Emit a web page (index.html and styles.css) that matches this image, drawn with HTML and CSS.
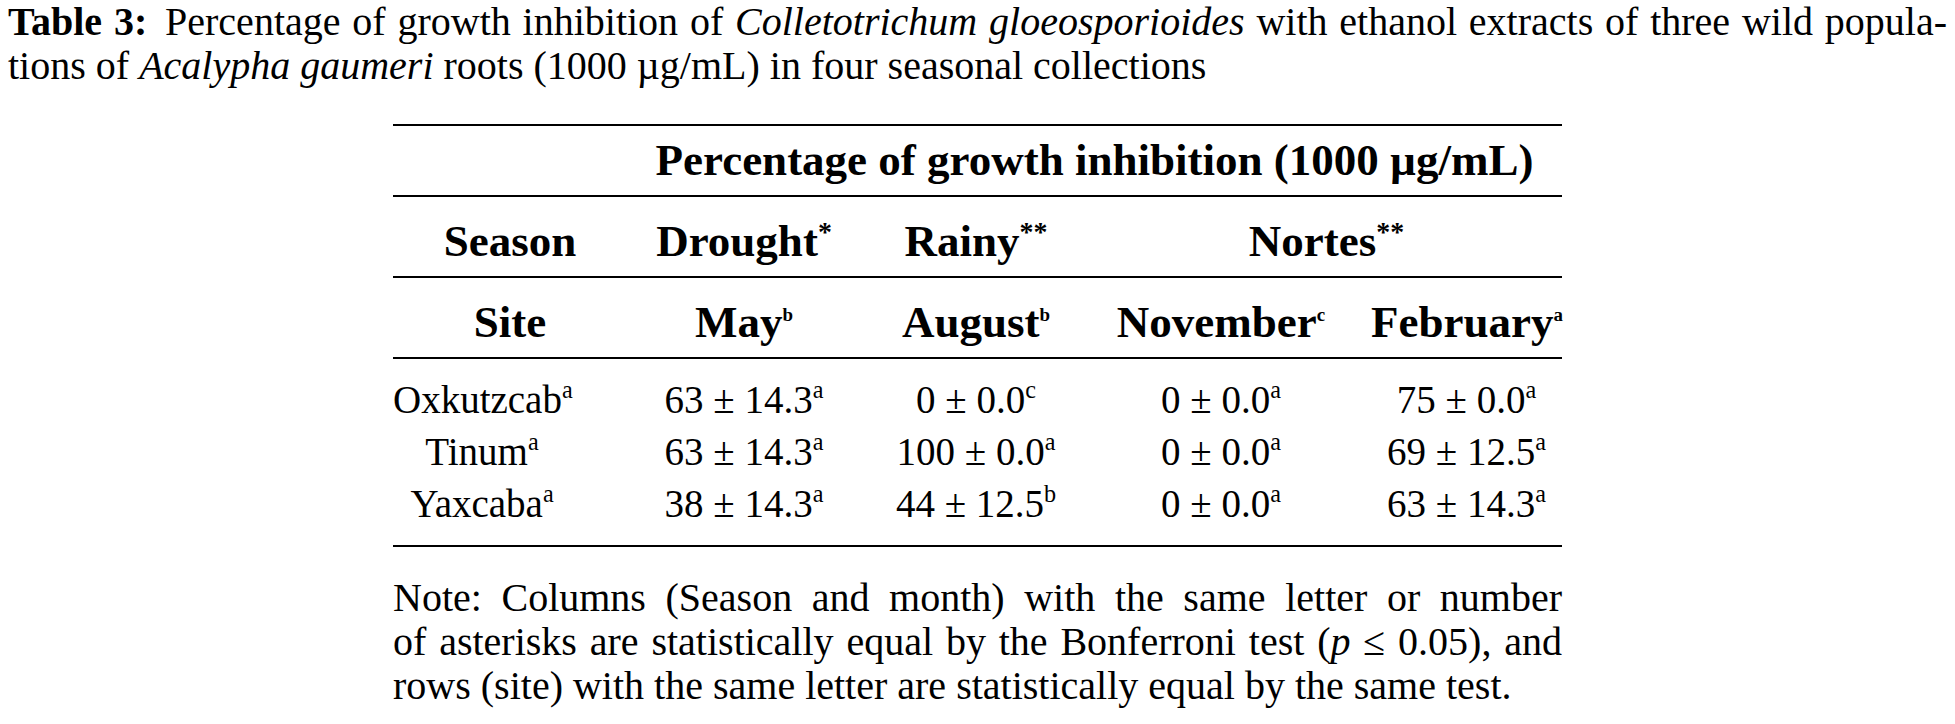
FILE: index.html
```html
<!DOCTYPE html>
<html lang="en">
<head>
<meta charset="utf-8">
<title>Table 3</title>
<link rel="stylesheet" href="styles.css">
</head>
<body>
<div class="page">
  <p class="caption">
    <span class="line full"><b class="label">Table 3:</b> Percentage of growth inhibition of <i>Colletotrichum gloeosporioides</i> with ethanol extracts of three wild popula-</span>
    <span class="line">tions of <i>Acalypha gaumeri</i> roots (1000 µg/mL) in four seasonal collections</span>
  </p>
  <div class="table-wrap">
    <table class="data">
      <colgroup>
        <col class="c1"><col class="c2"><col class="c3"><col class="c4"><col class="c5">
      </colgroup>
      <thead>
        <tr class="r1">
          <th></th>
          <th colspan="4">Percentage of growth inhibition (1000 µg/mL)</th>
        </tr>
        <tr class="r2">
          <th>Season</th>
          <th>Drought<span class="ast">*</span></th>
          <th>Rainy<span class="ast">**</span></th>
          <th colspan="2">Nortes<span class="ast">**</span></th>
        </tr>
        <tr class="r3">
          <th>Site</th>
          <th>May<sup class="hs">b</sup></th>
          <th>August<sup class="hs">b</sup></th>
          <th>November<sup class="hs">c</sup></th>
          <th class="last">February<sup class="hs">a</sup></th>
        </tr>
      </thead>
      <tbody>
        <tr class="first">
          <td class="site">Oxkutzcab<sup class="ds">a</sup></td>
          <td>63 ± 14.3<sup class="ds">a</sup></td>
          <td>0 ± 0.0<sup class="ds">c</sup></td>
          <td>0 ± 0.0<sup class="ds">a</sup></td>
          <td class="last">75 ± 0.0<sup class="ds">a</sup></td>
        </tr>
        <tr>
          <td class="site">Tinum<sup class="ds">a</sup></td>
          <td>63 ± 14.3<sup class="ds">a</sup></td>
          <td>100 ± 0.0<sup class="ds">a</sup></td>
          <td>0 ± 0.0<sup class="ds">a</sup></td>
          <td class="last">69 ± 12.5<sup class="ds">a</sup></td>
        </tr>
        <tr class="end">
          <td class="site">Yaxcaba<sup class="ds">a</sup></td>
          <td>38 ± 14.3<sup class="ds">a</sup></td>
          <td>44 ± 12.5<sup class="ds">b</sup></td>
          <td>0 ± 0.0<sup class="ds">a</sup></td>
          <td class="last">63 ± 14.3<sup class="ds">a</sup></td>
        </tr>
      </tbody>
    </table>
    <p class="note">
      <span class="line full">Note: Columns (Season and month) with the same letter or number</span>
      <span class="line full">of asterisks are statistically equal by the Bonferroni test (<i>p</i> ≤ 0.05), and</span>
      <span class="line">rows (site) with the same letter are statistically equal by the same test.</span>
    </p>
  </div>
</div>
</body>
</html>
```

FILE: styles.css
```css
html, body {
  margin: 0;
  padding: 0;
  background: #ffffff;
  color: #000000;
  font-family: "Liberation Serif", "Times New Roman", serif;
}

.page {
  padding: 0 8px;
}

.caption {
  margin: 0;
  font-size: 40px;
  line-height: 44px;
}

.line {
  display: block;
}

.full {
  text-align: justify;
  text-align-last: justify;
}

.label {
  font-weight: bold;
  margin-right: 6px;
}

.table-wrap {
  width: 1169px;
  margin: 36px auto 0;
}

.data {
  width: 1169px;
  table-layout: fixed;
  border-collapse: separate;
  border-spacing: 0;
  border-top: 2px solid #000;
  border-bottom: 2px solid #000;
}

.c1 { width: 234px; }
.c2 { width: 234px; }
.c3 { width: 230px; }
.c4 { width: 260px; }
.c5 { width: 211px; }

.data th {
  font-weight: bold;
  font-size: 45px;
  text-align: center;
  padding: 10px 0 0;
  line-height: 69px;
  white-space: nowrap;
  border-bottom: 2px solid #000;
}

.data .r1 th {
  font-size: 45px;
  padding-top: 0;
}

.data th.last,
.data td.last {
  padding-left: 20px;
}

.ast {
  font-size: 0.62em;
  font-weight: bold;
  line-height: 0;
  vertical-align: 0.55em;
}

.hs {
  font-size: 0.42em;
  line-height: 0;
  vertical-align: 0.85em;
}

.data td {
  font-size: 39px;
  line-height: 52px;
  text-align: center;
  padding: 0;
  white-space: nowrap;
}

.data td.site {
  padding-right: 56px;
}

.data tr.first td {
  padding-top: 15px;
}

.data tr.end td {
  padding-bottom: 15px;
}

.ds {
  font-size: 0.62em;
  line-height: 0;
  vertical-align: 0.62em;
}

.note {
  margin: 29px 0 0;
  font-size: 40px;
  line-height: 44px;
}
```
